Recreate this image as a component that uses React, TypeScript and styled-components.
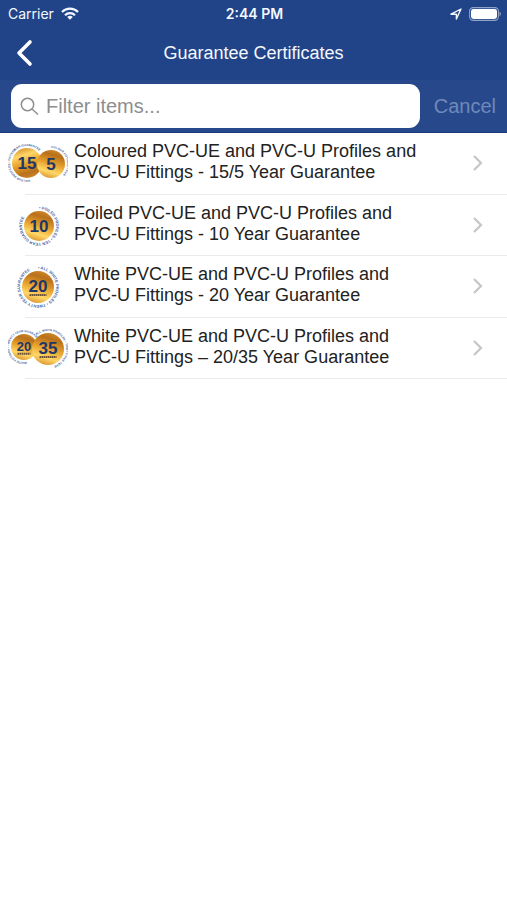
import React, { useId, useState } from 'react';
import styled, { createGlobalStyle } from 'styled-components';

const GlobalStyle = createGlobalStyle`
  *, *::before, *::after { box-sizing: border-box; }
  body {
    margin: 0;
    background: #fff;
    color: #222;
    font-family: "Liberation Sans", Arial, sans-serif;
  }
`;

const Page = styled.div`
  min-height: 100vh;
  display: flex;
  flex-direction: column;
`;

const Header = styled.header`
  background: #214488;
  color: #f4f8ff;
`;

const StatusBar = styled.div`
  display: grid;
  grid-template-columns: 1fr auto 1fr;
  align-items: center;
  height: 27px;
  padding: 0 6px 0 8px;
  font-family: Inter, sans-serif;
  font-size: 14px;
`;

const StatusGroup = styled.div<{ $end?: boolean }>`
  display: flex;
  align-items: center;
  justify-content: ${(p) => (p.$end ? 'flex-end' : 'flex-start')};
  gap: 7px;
`;

const Clock = styled.time`
  font-weight: 600;
`;

const NavBar = styled.div`
  display: grid;
  grid-template-columns: 48px 1fr 48px;
  align-items: center;
  height: 53px;
  padding-bottom: 2px;
`;

const BackButton = styled.button`
  display: flex;
  align-items: center;
  height: 48px;
  padding: 0 0 0 14px;
  border: 0;
  background: none;
  color: #fff;
  cursor: pointer;
`;

const Title = styled.h1`
  margin: 0;
  font-size: 18px;
  line-height: 24px;
  font-weight: 400;
  text-align: center;
`;

const SearchBar = styled.form`
  display: flex;
  align-items: center;
  gap: 14px;
  height: 53px;
  padding: 0 11px;
  background: #27498b;
  border-bottom: 1px solid #17397c;
`;

const SearchField = styled.label`
  flex: 1;
  min-width: 0;
  display: flex;
  align-items: center;
  gap: 7px;
  height: 44px;
  padding: 0 9px;
  border-radius: 11px;
  background: #fff;
  color: #8e8e8e;
`;

const SearchInput = styled.input`
  flex: 1;
  min-width: 0;
  padding: 0;
  border: 0;
  outline: 0;
  background: none;
  color: #222;
  font: inherit;
  font-size: 20px;
  line-height: 24px;
  &::placeholder { color: #8e8e8e; opacity: 1; }
`;

const CancelButton = styled.button`
  padding: 0;
  border: 0;
  background: none;
  color: #6f89ba;
  font: inherit;
  font-size: 20px;
  line-height: 24px;
`;

const List = styled.ul`
  margin: 0;
  padding: 0;
  list-style: none;
`;

const Row = styled.li`
  display: flex;
  min-height: 62px;
  &:nth-child(even) { min-height: 61px; }
  background: linear-gradient(#ebebed, #ebebed) 25px 100% / 100% 1px no-repeat;
`;

const RowLink = styled.a`
  flex: 1;
  display: flex;
  align-items: center;
  gap: 6px;
  padding: 0 24px 2px 8px;
  color: inherit;
  text-decoration: none;
`;

const RowText = styled.span`
  flex: 1;
  padding-bottom: 2px;
  font-size: 18px;
  line-height: 21px;
  white-space: pre-line;
`;

const Badge = styled.svg`
  flex: none;
  width: 60px;
  height: 46px;
`;

const BadgeNumber = styled.text`
  font-family: "Liberation Sans", sans-serif;
  font-weight: 700;
  fill: #1d3768;
  text-anchor: middle;
`;

const BadgeRing = styled.text`
  font-family: "Liberation Sans", sans-serif;
  font-weight: 700;
  fill: #4763a3;
`;

type Arc = { text: string; from: number };

type Seal = {
  value: string;
  arcs: Arc[];
  cx: number;
  cy: number;
  r: number;
  size: number;
  ringSize: number;
  lightTop?: boolean;
  caption?: boolean;
};

/* Circle path that starts at the given clock angle (0 = top) and runs clockwise. */
function ringPath(cx: number, cy: number, radius: number, from: number) {
  const a = ((from - 90) * Math.PI) / 180;
  const dx = radius * Math.cos(a);
  const dy = radius * Math.sin(a);
  return `M${cx + dx} ${cy + dy}A${radius} ${radius} 0 1 1 ${cx - dx} ${cy - dy}A${radius} ${radius} 0 1 1 ${cx + dx} ${cy + dy}`;
}

function SealShape({ seal }: { seal: Seal }) {
  const id = useId();
  const { cx, cy, r, size, ringSize, lightTop } = seal;
  return (
    <g>
      <defs>
        <linearGradient id={`${id}g`} x1="0.7" y1={lightTop ? 1 : 0} x2="0.4" y2={lightTop ? 0 : 1}>
          <stop offset="0" stopColor="#d18a2a" />
          <stop offset="0.2" stopColor="#b9701c" />
          <stop offset="0.5" stopColor="#e6a02c" />
          <stop offset="0.78" stopColor="#ffd768" />
          <stop offset="1" stopColor="#dd9a33" />
        </linearGradient>
      </defs>
      {seal.arcs.map((arc, i) => (
        <g key={arc.text}>
          <path id={`${id}p${i}`} d={ringPath(cx, cy, r + 2, arc.from)} fill="none" />
          <BadgeRing fontSize={ringSize}>
            <textPath href={`#${id}p${i}`}>{arc.text}</textPath>
          </BadgeRing>
        </g>
      ))}
      <circle cx={cx} cy={cy} r={r} fill={`url(#${id}g)`} />
      <BadgeNumber x={cx} y={cy + size * 0.36 - (seal.caption ? 1 : 0)} fontSize={size}>
        {seal.value}
      </BadgeNumber>
      {seal.caption && (
        <path
          d={`M${cx - size / 2} ${cy + size * 0.36 + 2}h${size}`}
          stroke="#6d5534"
          strokeWidth="2"
          strokeDasharray="1.6 0.4"
        />
      )}
    </g>
  );
}

const items: { id: string; text: string; seals: Seal[] }[] = [
  {
    id: '15-5',
    text: 'Coloured PVC-UE and PVC-U Profiles and\nPVC-U Fittings - 15/5 Year Guarantee',
    seals: [
      {
        value: '15', cx: 19, cy: 23, r: 15, size: 17, ringSize: 3, lightTop: true,
        arcs: [
          { text: 'YEAR GUARANTEE', from: -50 },
          { text: 'COLOUR PROFILES • FIFTEEN', from: 170 },
        ],
      },
      {
        value: '5', cx: 43, cy: 24, r: 14, size: 17, ringSize: 3,
        arcs: [{ text: 'COLOUR FITTINGS • FIVE', from: 0 }],
      },
    ],
  },
  {
    id: '10',
    text: 'Foiled PVC-UE and PVC-U Profiles and\nPVC-U Fittings - 10 Year Guarantee',
    seals: [
      {
        value: '10', cx: 31, cy: 24, r: 15, size: 17, ringSize: 4,
        arcs: [{ text: '• FOILED PROFILES • TEN YEAR GUARANTEE', from: 0 }],
      },
    ],
  },
  {
    id: '20',
    text: 'White PVC-UE and PVC-U Profiles and\nPVC-U Fittings - 20 Year Guarantee',
    seals: [
      {
        value: '20', cx: 30, cy: 24, r: 16, size: 17, ringSize: 4, caption: true,
        arcs: [{ text: '• ALL WHITE PROFILES • TWENTY YEAR GUARANTEE', from: 0 }],
      },
    ],
  },
  {
    id: '20-35',
    text: 'White PVC-UE and PVC-U Profiles and\nPVC-U Fittings – 20/35 Year Guarantee',
    seals: [
      {
        value: '20', cx: 16, cy: 22, r: 13, size: 13, ringSize: 3, caption: true,
        arcs: [{ text: 'WHITE FITTINGS • TWENTY YEAR GUARANTEE', from: 170 }],
      },
      {
        value: '35', cx: 40, cy: 24, r: 16, size: 17, ringSize: 3, caption: true,
        arcs: [{ text: 'ALL WHITE PROFILES • THIRTY FIVE YEAR', from: -40 }],
      },
    ],
  },
];

export default function App() {
  const [query, setQuery] = useState('');
  const shown = items.filter((i) => i.text.toLowerCase().includes(query.toLowerCase()));

  return (
    <Page>
      <GlobalStyle />
      <Header>
        <StatusBar>
          <StatusGroup>
            <span>Carrier</span>
            <svg width="18" height="13" viewBox="0 0 18 13" fill="none" stroke="currentColor" strokeWidth="2.2" aria-label="Wi-Fi">
              <path d="M1 5a11.4 11.4 0 0 1 16 0M4 8.2a7.1 7.1 0 0 1 10 0" />
              <path d="M9 12.8 6.2 10a4.2 4.2 0 0 1 5.6 0z" fill="currentColor" stroke="none" />
            </svg>
          </StatusGroup>
          <Clock>2:44 PM</Clock>
          <StatusGroup $end>
            <svg width="12" height="12" viewBox="0 0 12 12" fill="none" stroke="currentColor" strokeWidth="1.4" strokeLinejoin="round" aria-label="Location">
              <path d="M1 6.2 11 1 6.4 11V6.2z" />
            </svg>
            <svg width="32" height="14" viewBox="0 0 32 14" aria-label="Battery">
              <rect x="0.6" y="0.6" width="28.8" height="12.8" rx="3.6" fill="none" stroke="#8fa3c9" strokeWidth="1.1" />
              <rect x="2" y="2" width="26" height="10" rx="2.4" fill="#fff" />
              <path d="M30.5 4.8a2.4 2.4 0 0 1 0 4.4z" fill="#8fa3c9" />
            </svg>
          </StatusGroup>
        </StatusBar>
        <NavBar>
          <BackButton type="button" aria-label="Back">
            <svg width="20" height="28" viewBox="0 0 20 28" fill="none" stroke="currentColor" strokeWidth="3.6" strokeLinecap="round" strokeLinejoin="round">
              <path d="M16 3 5 14l11 11" />
            </svg>
          </BackButton>
          <Title>Guarantee Certificates</Title>
        </NavBar>
        <SearchBar role="search" onSubmit={(e) => e.preventDefault()}>
          <SearchField>
            <svg width="19" height="19" viewBox="0 0 19 19" fill="none" stroke="currentColor" strokeWidth="1.5" aria-hidden="true">
              <circle cx="7.5" cy="7.5" r="6.2" />
              <path d="m12 12 6 5.5" />
            </svg>
            <SearchInput
              aria-label="Filter items"
              placeholder="Filter items..."
              value={query}
              onChange={(e) => setQuery(e.target.value)}
            />
          </SearchField>
          <CancelButton type="button" onClick={() => setQuery('')}>
            Cancel
          </CancelButton>
        </SearchBar>
      </Header>
      <List>
        {shown.map((item) => (
          <Row key={item.id}>
            <RowLink href={`#${item.id}`}>
              <Badge viewBox="0 0 60 46" aria-hidden="true">
                {item.seals.map((seal) => (
                  <SealShape key={seal.value} seal={seal} />
                ))}
              </Badge>
              <RowText>{item.text}</RowText>
              <svg width="11" height="18" viewBox="0 0 11 18" fill="none" stroke="#c5c5ca" strokeWidth="2.2" aria-hidden="true">
                <path d="m2 2 7 7-7 7" />
              </svg>
            </RowLink>
          </Row>
        ))}
      </List>
    </Page>
  );
}
